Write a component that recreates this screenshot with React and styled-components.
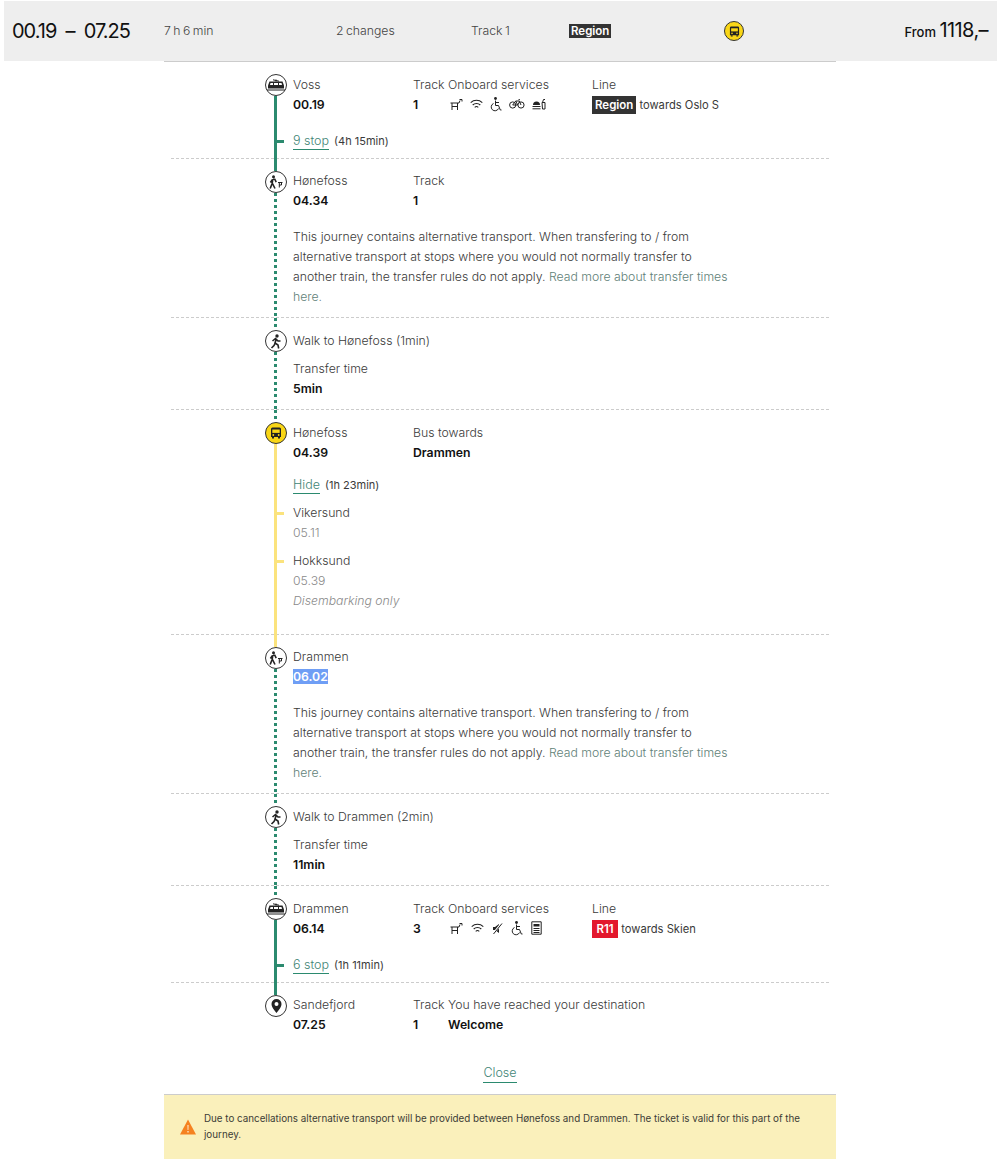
import React from 'react';
import styled, { createGlobalStyle } from 'styled-components';

const GREEN = '#2b8a6f';
const YELLOW = '#fbe37d';

const GlobalStyle = createGlobalStyle`
  html, body {
    margin: 0;
    background: #fff;
    color: #3a3a3a;
    font-family: Inter, "Liberation Sans", sans-serif;
    font-size: 12.25px;
    font-weight: 300;
    line-height: 20px;
  }
`;

const Page = styled.div`
  width: 997px;
  padding-top: 1px;
`;

const Summary = styled.header`
  display: grid;
  grid-template-columns: 152px 172px 135px 98px 155px 1fr auto;
  align-items: center;
  height: 60px;
  margin-left: 4px;
  padding: 0 9px 0 8px;
  background: #eee;
  box-sizing: border-box;
`;

const Times = styled.div`
  font-size: 20px;
  font-weight: 400;
  letter-spacing: -1px;
  color: #111;
  white-space: pre;
`;

const SummaryText = styled.div`
  color: #444;
  word-spacing: -1px;
`;

const Price = styled.div`
  font-size: 13px;
  font-weight: 500;
  color: #111;
  white-space: nowrap;
  strong {
    font-size: 20px;
    font-weight: 400;
    letter-spacing: -0.6px;
  }
`;

const Panel = styled.main`
  width: 672px;
  margin-left: 164px;
  border-top: 1px solid #ccc;
`;

const Leg = styled.section`
  display: grid;
  grid-template-columns: 22px 1fr;
  column-gap: 6px;
  margin: 0 7px;
  padding: 0 0 0 94px;
  border-bottom: ${(p) => (p.$last ? 'none' : '1px dashed #ccc')};
`;

function railFill({ $kind }) {
  if ($kind === 'dotted') {
    return `repeating-linear-gradient(to bottom, ${GREEN} 0 3px, transparent 3px 6px)`;
  }
  if ($kind === 'green') return GREEN;
  if ($kind === 'yellow') return YELLOW;
  return 'transparent';
}

const Rail = styled.div`
  display: flex;
  flex-direction: column;
  align-items: center;
  margin-bottom: ${(p) => (p.$last ? '0' : '-1px')};
`;

const RailStub = styled.div`
  width: 3px;
  margin-right: 1px;
  height: 12px;
  background: ${railFill};
`;

const RailLine = styled.div`
  flex: 1;
  width: 3px;
  margin-right: 1px;
  background: ${railFill};
`;

const Badge = styled.span`
  flex: none;
  display: flex;
  align-items: center;
  justify-content: center;
  width: ${(p) => p.$size || 22}px;
  height: ${(p) => p.$size || 22}px;
  box-sizing: border-box;
  border: 1.4px solid #333;
  border-radius: 50%;
  background: ${(p) => (p.$bus ? '#f9d616' : '#fff')};
`;

const Body = styled.div`
  padding: ${(p) => p.$top ?? 13}px 0 ${(p) => p.$bottom ?? 10}px;
`;

const Columns = styled.div`
  display: grid;
  grid-template-columns: 120px 35px 144px 1fr;
`;

const Cell = styled.div`
  white-space: nowrap;
`;

const Strong = styled.div`
  font-weight: 600;
  color: #111;
  white-space: nowrap;
`;

const Selected = styled.span`
  background: #6f9ef5;
  color: #fff;
`;

const Services = styled.div`
  display: flex;
  align-items: center;
  gap: ${(p) => p.$gap || 7}px;
  height: 20px;
  padding-left: 2px;
  margin-top: -1px;
`;

const LineRow = styled.div`
  display: flex;
  align-items: center;
  gap: 3px;
  height: 20px;
  font-size: 11.2px;
  font-weight: 400;
  white-space: nowrap;
`;

const LineTag = styled.span`
  padding: 0 ${(p) => p.$pad ?? 3}px;
  line-height: ${(p) => p.$height || 18}px;
  background: ${(p) => p.$bg || '#333'};
  color: #fff;
  font-size: 11.5px;
  font-weight: 600;
`;

const StopsRow = styled.div`
  position: relative;
  margin-top: ${(p) => p.$gap}px;
  font-size: 11px;
  font-weight: 400;
  &::before {
    content: '';
    position: absolute;
    left: -16px;
    top: 8.5px;
    width: 7px;
    height: 3px;
    background: ${(p) => p.$color};
  }
`;

const TextLink = styled.a`
  color: #3f8576;
  font-size: 12.5px;
  font-weight: 300;
  border-bottom: 1px solid ${GREEN};
  padding-bottom: 1px;
  margin-right: 5px;
`;

const Intermediate = styled.div`
  position: relative;
  margin-top: 8px;
  &::before {
    content: '';
    position: absolute;
    left: -16px;
    top: 8.5px;
    width: 7px;
    height: 3px;
    background: ${YELLOW};
  }
`;

const Muted = styled.div`
  color: #8a8a8a;
`;

const MutedItalic = styled(Muted)`
  font-style: italic;
`;

const Paragraph = styled.p`
  width: 440px;
  margin: 16px 0 0;
  a {
    color: #5f7f78;
  }
`;

const TransferLabel = styled.div`
  margin-top: 8px;
`;

const CloseRow = styled.div`
  display: flex;
  justify-content: center;
  margin-top: 28px;
  height: 31px;
  a {
    margin: 0;
    height: 19px;
    padding: 0;
  }
`;

const Notice = styled.aside`
  display: flex;
  align-items: center;
  gap: 8px;
  height: 65px;
  padding: 0 32px 0 16px;
  box-sizing: border-box;
  background: #faf0bb;
  border-top: 1px solid #ccc;
  font-size: 9.8px;
  line-height: 16px;
  font-weight: 400;
  color: #3c3c36;
  svg {
    flex: none;
  }
`;

const stroke = { fill: 'none', stroke: '#222', strokeWidth: 1 };

function TrainIcon() {
  return (
    <svg width="18" height="12" viewBox="0 0 18 12">
      <path d="M9 0.5v2M6 0.8l6 1.4" {...stroke} />
      <path d="M2.500 2.500h13l1.500 4v3H1v-3z" fill="#222" />
      <path d="M3.500 4h2.500v2H3zM7 4h4v2H7zM12 4h2.500l.5 2h-3z" fill="#fff" />
      <path d="M0 11h18" {...stroke} />
    </svg>
  );
}

function TransferIcon() {
  return (
    <svg width="14" height="14" viewBox="0 0 14 14">
      <circle cx="4.500" cy="1.700" r="1.500" fill="#222" />
      <path d="M3.800 4.200l-.6 4-2 5.300M3.500 8.500l2.500 5M3.500 4.500L1.400 7.500M4 4.200h1.800l1.400 3" fill="none" stroke="#222" strokeWidth="1.600" />
      <path d="M9 7.500h4.500M10.300 7.500v5M12.500 7.500v2.500M10.300 10h2.200" {...stroke} />
    </svg>
  );
}

function WalkIcon() {
  return (
    <svg width="14" height="15" viewBox="0 0 14 15">
      <circle cx="8" cy="2" r="1.700" fill="#222" />
      <path d="M7.500 4.500l-1.500 4.500 3 2 .7 3.500M6.200 9L5 11.500 2.500 14M3.500 7l3-2.500 2.500 2.500h2.500" fill="none" stroke="#222" strokeWidth="1.600" />
    </svg>
  );
}

function BusIcon({ size = 12 }) {
  return (
    <svg width={size} height={size} viewBox="0 0 12 12">
      <path d="M2.500 0.500h7a1.500 1.500 0 0 1 1.500 1.500v8H1V2a1.500 1.500 0 0 1 1.500-1.500z" fill="#222" />
      <path d="M2.300 2.500h7.400v3.400H2.300z" fill="#f9d616" />
      <circle cx="3.300" cy="8" r=".9" fill="#f9d616" />
      <circle cx="8.700" cy="8" r=".9" fill="#f9d616" />
      <path d="M2 10h2v1.500H2zM8 10h2v1.500H8z" fill="#222" />
    </svg>
  );
}

function PinIcon() {
  return (
    <svg width="11" height="14" viewBox="0 0 11 14">
      <path fillRule="evenodd" d="M5.500 0a5 5 0 0 1 5 5c0 3.500-5 9-5 9s-5-5.500-5-9a5 5 0 0 1 5-5zm0 3a2 2 0 1 0 0 4 2 2 0 0 0 0-4z" fill="#222" />
    </svg>
  );
}

function SeatIcon() {
  return (
    <svg width="13" height="13" viewBox="0 0 13 13">
      <path d="M.5 5h8.500M2 5v7M7.500 5v7M2 8.500h5.500M9 5l1-2.500" {...stroke} />
      <path d="M9.500 1.500h2.500v2" {...stroke} />
    </svg>
  );
}

function WifiIcon() {
  return (
    <svg width="13" height="11" viewBox="0 0 13 11">
      <path d="M.7 3.600a8.500 8.500 0 0 1 11.600 0M2.700 6a5.500 5.500 0 0 1 7.600 0" fill="none" stroke="#222" strokeWidth="1.100" />
      <path d="M4.700 8.300a2.700 2.700 0 0 1 3.600 0" fill="none" stroke="#222" strokeWidth="1.100" />
    </svg>
  );
}

function WheelchairIcon() {
  return (
    <svg width="12" height="15" viewBox="0 0 12 15">
      <circle cx="5.500" cy="1.500" r="1.400" fill="#222" />
      <path d="M5.500 3.500v5h3l1.800 4.500h1.200M5.500 5.500h3.500M3.500 6.500a3.800 3.800 0 1 0 5 5" {...stroke} />
    </svg>
  );
}

function BikeIcon() {
  return (
    <svg width="16" height="10" viewBox="0 0 16 10">
      <circle cx="3.700" cy="6" r="3.100" {...stroke} />
      <circle cx="12" cy="6" r="3.100" {...stroke} />
      <path d="M3.700 6l3-4h3.500L12 6M6.700 2l2 4H3.700M9.500.7h1.500" {...stroke} />
    </svg>
  );
}

function BistroIcon() {
  return (
    <svg width="14" height="11" viewBox="0 0 14 11">
      <path d="M1 6a3.500 3.500 0 0 1 7 0z" fill="#222" />
      <path d="M.5 7.500h8M.5 9.800h8" {...stroke} />
      <path d="M10 3.500h3v6.500h-2.500zM10.500 3.500L11.500.5H13" {...stroke} />
    </svg>
  );
}

function QuietIcon() {
  return (
    <svg width="11" height="13" viewBox="0 0 11 13">
      <path d="M1 5v3h2l4 3V2L3 5z" fill="#222" />
      <path d="M1 12L10 1" fill="none" stroke="#fff" strokeWidth="2" />
      <path d="M1.500 12L10 1.500" {...stroke} />
    </svg>
  );
}

function PaperIcon() {
  return (
    <svg width="11" height="14" viewBox="0 0 11 14">
      <path d="M.8.800h9.400v12.400H.8z" {...stroke} />
      <path d="M2.500 3h6v2.500h-6z" fill="#222" />
      <path d="M2.500 7.500h6M2.500 9.500h6M2.500 11.500h6" {...stroke} />
    </svg>
  );
}

function WarningIcon() {
  return (
    <svg width="16" height="16" viewBox="0 0 16 16">
      <path d="M8 0.500L16 15.500H0z" fill="#f58220" />
      <path d="M7.300 6h1.400l-.2 5h-1zM7.200 12h1.600v1.500H7.200z" fill="#fbd9b0" />
    </svg>
  );
}

function Stop({ icon, bus, top, below, last, paddingTop, bottom, children }) {
  return (
    <Leg $last={last}>
      <Rail $last={last}>
        <RailStub $kind={top} />
        <Badge $bus={bus}>{icon}</Badge>
        <RailLine $kind={below} />
      </Rail>
      <Body $top={paddingTop} $bottom={bottom}>{children}</Body>
    </Leg>
  );
}

function TransferNote() {
  return (
    <Paragraph>
      This journey contains alternative transport. When transfering to / from
      alternative transport at stops where you would not normally transfer to
      another train, the transfer rules do not apply.{' '}
      <a>Read more about transfer times here.</a>
    </Paragraph>
  );
}

function StopCount({ label, duration, color, gap = 16 }) {
  return (
    <StopsRow $color={color} $gap={gap}>
      <TextLink>{label}</TextLink>
      {duration}
    </StopsRow>
  );
}

export default function App() {
  return (
    <Page>
      <GlobalStyle />
      <Summary>
        <Times>00.19  –  07.25</Times>
        <SummaryText>7 h 6 min</SummaryText>
        <SummaryText>2 changes</SummaryText>
        <SummaryText>Track 1</SummaryText>
        <div>
          <LineTag $pad={2} $height={15}>Region</LineTag>
        </div>
        <Badge $bus $size={20}>
          <BusIcon size={11} />
        </Badge>
        <Price>
          From <strong>1118,–</strong>
        </Price>
      </Summary>
      <Panel>
        <Stop icon={<TrainIcon />} below="green" bottom={7}>
          <Columns>
            <Cell>Voss</Cell>
            <Cell>Track</Cell>
            <Cell>Onboard services</Cell>
            <Cell>Line</Cell>
            <Strong>00.19</Strong>
            <Strong>1</Strong>
            <Services>
              <SeatIcon />
              <WifiIcon />
              <WheelchairIcon />
              <BikeIcon />
              <BistroIcon />
            </Services>
            <LineRow>
              <LineTag>Region</LineTag> towards Oslo S
            </LineRow>
          </Columns>
          <StopCount label="9 stop" duration="(4h 15min)" color={GREEN} />
        </Stop>

        <Stop icon={<TransferIcon />} top="green" below="dotted" paddingTop={12}>
          <Columns>
            <Cell>Hønefoss</Cell>
            <Cell>Track</Cell>
            <Cell />
            <Cell />
            <Strong>04.34</Strong>
            <Strong>1</Strong>
          </Columns>
          <TransferNote />
        </Stop>

        <Stop icon={<WalkIcon />} top="dotted" below="dotted">
          <Cell>Walk to Hønefoss (1min)</Cell>
          <TransferLabel>Transfer time</TransferLabel>
          <Strong>5min</Strong>
        </Stop>

        <Stop icon={<BusIcon />} bus top="dotted" below="yellow" bottom={23}>
          <Columns>
            <Cell>Hønefoss</Cell>
            <Cell>Bus towards</Cell>
            <Cell />
            <Cell />
            <Strong>04.39</Strong>
            <Strong>Drammen</Strong>
          </Columns>
          <StopCount label="Hide" duration="(1h 23min)" color="transparent" gap={12} />
          <Intermediate>
            Vikersund
            <Muted>05.11</Muted>
          </Intermediate>
          <Intermediate>
            Hokksund
            <Muted>05.39</Muted>
            <MutedItalic>Disembarking only</MutedItalic>
          </Intermediate>
        </Stop>

        <Stop icon={<TransferIcon />} top="yellow" below="dotted" paddingTop={12}>
          <Cell>Drammen</Cell>
          <Strong>
            <Selected>06.02</Selected>
          </Strong>
          <TransferNote />
        </Stop>

        <Stop icon={<WalkIcon />} top="dotted" below="dotted">
          <Cell>Walk to Drammen (2min)</Cell>
          <TransferLabel>Transfer time</TransferLabel>
          <Strong>11min</Strong>
        </Stop>

        <Stop icon={<TrainIcon />} top="dotted" below="green" bottom={7}>
          <Columns>
            <Cell>Drammen</Cell>
            <Cell>Track</Cell>
            <Cell>Onboard services</Cell>
            <Cell>Line</Cell>
            <Strong>06.14</Strong>
            <Strong>3</Strong>
            <Services $gap={8}>
              <SeatIcon />
              <WifiIcon />
              <QuietIcon />
              <WheelchairIcon />
              <PaperIcon />
            </Services>
            <LineRow>
              <LineTag $bg="#e3182d" $pad={4.5}>R11</LineTag> towards Skien
            </LineRow>
          </Columns>
          <StopCount label="6 stop" duration="(1h 11min)" color={GREEN} />
        </Stop>

        <Stop icon={<PinIcon />} top="green" last paddingTop={12} bottom={0}>
          <Columns>
            <Cell>Sandefjord</Cell>
            <Cell>Track</Cell>
            <Cell>You have reached your destination</Cell>
            <Cell />
            <Strong>07.25</Strong>
            <Strong>1</Strong>
            <Strong>Welcome</Strong>
          </Columns>
        </Stop>

        <CloseRow>
          <TextLink>Close</TextLink>
        </CloseRow>
        <Notice>
          <WarningIcon />
          <span>
            Due to cancellations alternative transport will be provided between
            Hønefoss and Drammen. The ticket is valid for this part of the
            journey.
          </span>
        </Notice>
      </Panel>
    </Page>
  );
}
